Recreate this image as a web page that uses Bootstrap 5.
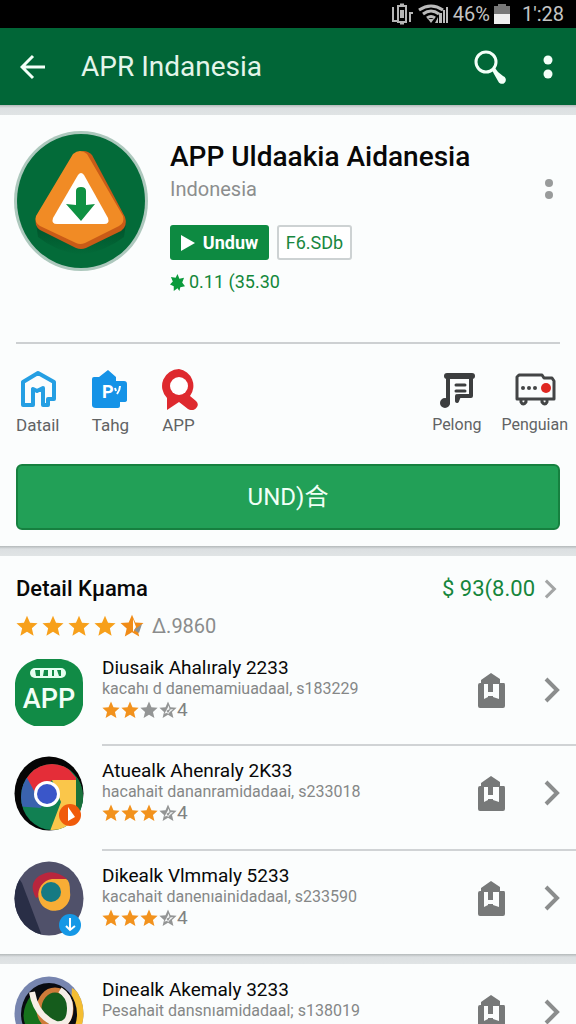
<!DOCTYPE html>
<html lang="id">
<head>
<meta charset="utf-8">
<meta name="viewport" content="width=device-width, initial-scale=1">
<title>APR Indanesia</title>
<link href="https://cdn.jsdelivr.net/npm/bootstrap@5.3.0/dist/css/bootstrap.min.css" rel="stylesheet">
<style>
body{font-family:Roboto,"Noto Sans CJK SC",sans-serif;background:#dfe3e4;color:#080808}
svg{display:block;flex:none}
button{background:none;border:0;padding:0;color:inherit}
a{color:inherit;text-decoration:none}
.screen{height:100vh}
.status{height:28px;background:#000;color:#c4c4c4;font-size:20px;line-height:28px;padding-right:12px}
.appbar{height:77px;background:#016637;color:#e4f5ea;padding:0 20px}
.appbar h1{font-size:28px;line-height:32px;font-weight:400;padding-left:36px}
.panel{background:#fbfdfd}
.gap-band{height:10px;background:linear-gradient(#b4b9ba,#dce0e2 3px,#e0e4e5)}
.logo{margin-left:-2px}
.about{margin-left:22px;padding-top:8px}
.app-title{font-size:28px;line-height:36px;font-weight:500}
.owner{font-size:20px;line-height:28px;color:#8c8e8e}
.actions{margin-top:22px}
.get{background:#0d8a41;color:#fff;font-size:18px;font-weight:700;width:99px;height:35px;border-radius:3px}
.size{border:2px solid #cdd2d3;color:#19873f;font-size:18px;width:75px;height:35px;border-radius:3px;background:#fff}
.score{color:#12873a;font-size:18px;line-height:24px;padding-top:2px}
.rule{height:2px;background:#cdd0d2}
.quick{color:#616364;font-size:17px;line-height:22px;margin-right:-8px;padding-top:24px}
.quick .right{font-size:16px}
.quick .right + .right{margin-left:20px}
.big{background:#22a057;border:2px solid #16803f;border-radius:6px;color:#f0fff5;font-size:24px;height:66px;margin-top:28px}
.head{height:83px;padding:16px 18px 0 16px}
.head h2{font-size:22px;line-height:30px;font-weight:500}
.price{font-size:22px;color:#16863c}
.price svg{color:#a3a5a5}
.count{font-size:20px;line-height:26px;color:#8a8c8c}
.entry{height:105px}
.art{margin-left:14px;padding-top:12px}
.entry .info{padding-top:15px;margin-left:18px}
#apps .entry:first-child .info{padding-top:18px}
#apps .entry:first-child .art{padding-top:17px}
.entry + .entry .info{border-top:2px solid #d0d3d5;padding-top:14px}
.entry h3{font-size:19px;line-height:22px;font-weight:400}
.entry p{font-size:16px;line-height:20px;color:#858787}
.mini{font-size:19px;line-height:22px;color:#808282}
.stars{gap:1px}
.tools{width:82px;padding-top:16px}
.tools a{color:#8b8d8d;padding-top:4px}
</style>
<script src="https://cdn.jsdelivr.net/npm/bootstrap@5.3.0/dist/js/bootstrap.bundle.min.js"></script>
</head>
<body>
<svg width="0" height="0" class="position-absolute" aria-hidden="true">
  <symbol id="star" viewBox="0 0 24 24"><path d="M12 .8l3.300 7.600 8.200.7-6.200 5.400 1.900 8.100L12 18.300l-7.200 4.300 1.900-8.100L.5 9.100l8.200-.7z"/></symbol>
  <symbol id="half" viewBox="0 0 24 24"><use href="#star" fill="#939595"/><path d="M13 6l1 5 5 0-5 4-1 2-3-1-3 1 3-5z" fill="#f4f6f6"/><path d="M10 13l6-3-4 6z" fill="#939595"/></symbol>
  <symbol id="store" viewBox="0 0 28 35"><path d="M13 0l9 6v4h4q1 0 1 2v21q0 2-2 2H2q-2 0-2-2V12q0-2 2-2h1V7z" fill="#777979"/><path d="M6 11h4v8h5v-8h6v15l-6-2H10l-4 2z" fill="#fbfdfd"/><path d="M10 23h5v3h-5z" fill="#777979"/></symbol>
  <symbol id="next" viewBox="0 0 16 26"><path d="M2 2l11 11L2 24" fill="none" stroke="currentColor" stroke-width="4"/></symbol>
</svg>
<div class="screen d-flex flex-column overflow-hidden">
  <div class="status d-flex align-items-center justify-content-end flex-shrink-0">
    <svg width="22" height="22" viewBox="0 0 22 22" fill="none" stroke="#b5b5b5" stroke-width="2"><path d="M2 4v14h4M7 3h8v16H7zM19 19V9M19 10h3"/><path d="M9 2h4M9 20h4" stroke-width="3"/><path d="M10 8h2v6h-2z" fill="#bbb"/></svg>
    <svg class="ms-1" width="32" height="20" viewBox="0 0 32 20"><g fill="none" stroke="#bbb" stroke-width="3"><path d="M2 6q12-8 24 0M6 10q8-6 16 0M10 14q4-3 8 0"/></g><path d="M11 15h6l-3 4zM18 19l3-6v6zM22 19V9h3v10zM26 19V6h2v13zM29 19V3h2v16z" fill="#bbb"/></svg>
    <span class="ms-1">46%</span>
    <svg class="ms-1" width="16" height="20" viewBox="0 0 16 20"><path d="M0 2h4V0h8v2h4v18H0z" fill="#777"/><path d="M0 10h16v10H0z" fill="#eee"/></svg>
    <span class="ms-2 ps-1">1':28</span>
  </div>
  <header class="appbar d-flex align-items-center flex-shrink-0">
    <button aria-label="Kembali"><svg width="25" height="26" viewBox="0 0 25 26" fill="none" stroke="#f3fff8" stroke-width="3"><path d="M13 2L2 13l11 11M2 13h23"/></svg></button>
    <h1 class="m-0 me-auto">APR Indanesia</h1>
    <button aria-label="Cari"><svg width="34" height="34" viewBox="0 0 34 34"><circle cx="12" cy="12" r="10" fill="none" stroke="#f3fff8" stroke-width="3"/><path d="M18 20l3-2 3 4 5 4a4 4 0 1 1-5 5l-4-7z" fill="#f3fff8"/></svg></button>
    <button class="ms-4 ps-2" aria-label="Menu"><svg width="16" height="26" viewBox="0 0 16 26" fill="#f3fff8"><circle cx="8" cy="6" r="4.500"/><circle cx="8" cy="20" r="4.500"/></svg></button>
  </header>
  <div class="gap-band flex-shrink-0"></div>
  <main>
    <section class="panel px-3 pt-3 pb-3">
      <div class="d-flex">
        <svg class="logo" width="134" height="141" viewBox="0 0 134 141"><defs><linearGradient id="shade" x1="0" y1="0" x2="0" y2="1"><stop offset="0" stop-color="#00522a"/><stop offset="1" stop-color="#036b39"/></linearGradient></defs><ellipse cx="67" cy="70" rx="67" ry="70" fill="#adc8bd"/><ellipse cx="67" cy="70" rx="64" ry="67" fill="#036b39"/><path d="M22 92l45 22 45-22-2 14q-18 14-43 18-26-4-43-18z" fill="url(#shade)"/><path d="M61 24q9-8 17 0l33 62q3 9-4 14l-35 17q-5 2-10 0L26 99q-6-4-4-13z" fill="#c95b17"/><path d="M59 23q7-6 14 0l36 62q2 7-4 10l-34 17q-5 2-9 0L26 95q-6-4-4-10z" fill="#f18b25"/><path d="M64 44q3-4 6 0l24 43q2 6-4 6H43q-6 0-4-6z" fill="#fff"/><path d="M62 60q0-4 5-4t5 4v14l9-1-14 17-15-17 10 1z" fill="#0f9143"/></svg>
        <div class="about flex-fill">
          <h2 class="app-title m-0">APP Uldaakia Aidanesia</h2>
          <div class="d-flex justify-content-between align-items-center"><span class="owner">Indonesia</span><button aria-label="Opsi"><svg width="24" height="24" viewBox="0 0 24 24" fill="#999b9b"><circle cx="13" cy="6" r="4"/><circle cx="13" cy="18" r="4"/></svg></button></div>
          <div class="actions d-flex gap-2">
            <button class="get d-flex align-items-center justify-content-center gap-2"><svg width="14" height="16" viewBox="0 0 14 16"><path d="M0 0l14 8-14 8z" fill="#fff"/></svg>Unduw</button>
            <button class="size">F6.SDb</button>
          </div>
          <div class="score d-flex align-items-center mt-2"><svg class="me-1" width="15" height="17" viewBox="0 0 16 18"><path d="M8 0l2 5 5-1-2 5 3 4-5 1-1 4-2-3-4 3v-5l-4-2 3-3-2-5 5 1z" fill="#0a9a3b"/></svg>0.11 (35.30</div>
        </div>
      </div>
      <div class="rule mt-5"></div>
      <nav class="quick d-flex">
        <a href="#" class="d-flex flex-column align-items-center"><svg width="38" height="42" viewBox="0 0 38 42"><path d="M4 15L20 5l16 10v17l-3 3h-4V21l-8 2h-6v15H4z" fill="#fbfdfd"/><path d="M9 37H4V14L19 5l16 9v17h-6v6h-5V20l-6 3-4-2v16H9" fill="none" stroke="#259fe3" stroke-width="4" stroke-linejoin="round"/></svg><span class="mt-1">Datail</span></a>
        <a href="#" class="d-flex flex-column align-items-center ms-4 ps-2"><svg width="38" height="42" viewBox="0 0 38 42"><path d="M3 9h5l9-7 8 7v4h8q3 0 3 3v16q0 2-3 2h-4v4q0 2-2 2H5q-4 0-4-3V11q0-2 2-2z" fill="#1593e7"/><text x="11" y="30" font-size="18" font-weight="700" fill="#fff">P</text><path d="M24 20l1 3M29 18q0 4-3 8" fill="none" stroke="#fff" stroke-width="2"/></svg><span class="mt-1">Tahg</span></a>
        <a href="#" class="d-flex flex-column align-items-center ms-4 ps-1"><svg class="ms-1" width="38" height="42" viewBox="0 0 38 42"><path d="M18 1a17 17 0 0 0-12 29v12l12-8 9 7q6 3 9-2 2-3-1-6l-6-5A17 17 0 0 0 18 1z" fill="#de292e"/><circle cx="18" cy="18" r="9" fill="#fff"/></svg><span class="mt-1">APP</span></a>
        <a href="#" class="right d-flex flex-column align-items-center ms-auto"><svg width="38" height="42" viewBox="0 0 38 42" fill="none" stroke="#3c3e3f" stroke-width="4" stroke-linejoin="round" stroke-linecap="round"><path d="M9 8h25" stroke-width="6"/><path d="M10 8v27M33 9v19H21l-2 5v-5" stroke-width="4"/><path d="M18 17h9M18 23h9" stroke-width="3"/><circle cx="7" cy="35" r="4" fill="#3c3e3f" stroke-width="2"/></svg><span class="mt-1">Pelong</span></a>
        <a href="#" class="right d-flex flex-column align-items-center"><svg width="42" height="42" viewBox="0 0 42 42" fill="none" stroke="#434546" stroke-width="3" stroke-linejoin="round"><path d="M5 7h23l2 3h8l2 3v18H3V9zM7 31v3q2 4 5 0v-3M28 31v3q3 4 5 0v-3"/><g fill="#434546" stroke="none"><circle cx="9" cy="20" r="2"/><circle cx="15" cy="20" r="2"/><circle cx="21" cy="20" r="2"/></g><circle cx="32" cy="20" r="5" fill="#df2822" stroke="none"/></svg><span class="mt-1">Penguian</span></a>
      </nav>
      <button class="big w-100">UND)合</button>
    </section>
    <div class="gap-band"></div>
    <section class="panel">
      <div class="head">
        <div class="d-flex align-items-center justify-content-between"><h2 class="m-0">Detail Kµama</h2><a href="#" class="price d-flex align-items-center">$ 93(8.00<svg class="ms-2" width="15" height="20"><use href="#next"/></svg></a></div>
        <div class="d-flex align-items-center mt-2"><div class="d-flex gap-1"><svg width="22" height="24" fill="#f7a01b"><use href="#star"/></svg><svg width="22" height="24" fill="#f7a01b"><use href="#star"/></svg><svg width="22" height="24" fill="#f7a01b"><use href="#star"/></svg><svg width="22" height="24" fill="#f7a01b"><use href="#star"/></svg><svg width="24" height="24" viewBox="0 0 24 24"><use href="#star" fill="#f08b17"/><path d="M13 5l3 8-3 5z" fill="#fff"/><path d="M14 16l8-6-3 9z" fill="#8c9192"/></svg></div><span class="count ms-2">Δ.9860</span></div>
      </div>
      <div id="apps"></div>
    </section>
    <div class="gap-band"></div>
    <section class="panel" id="more"></section>
  </main>
</div>
<template id="art0"><svg width="70" height="75" viewBox="0 0 70 75"><path d="M23 3h24q22 4 22 24v22q-3 16-19 21H20Q4 65 1 49V27Q3 9 23 3z" fill="#118b46"/><rect x="16" y="12" width="36" height="10" rx="5" fill="#e5fff0"/><path d="M21 14h5v6h-4zM30 14h4v6h-5zM38 14h2v6h-2zM43 14h4v6h-2z" fill="#118b46"/><text x="35" y="52" text-anchor="middle" font-size="27" font-weight="500" fill="#f2fff7">APP</text></svg></template>
<template id="art1"><svg width="70" height="75" viewBox="0 0 70 75"><defs><clipPath id="c1"><ellipse cx="38" cy="41" rx="31" ry="33"/></clipPath></defs><ellipse cx="35" cy="37.500" rx="34.500" ry="37" fill="#050505"/><g clip-path="url(#c1)"><path d="M0 0h70v75H0z" fill="#118052"/><path d="M0 22h14l18 18-5 12-27-2z" fill="#3a62ad"/><path d="M12 20Q28-4 52 10l12 14H38L24 42z" fill="#e42d38"/><path d="M38 24h24v51H36l11-29z" fill="#fac64a"/><path d="M62 20h8v35h-8z" fill="#19713a"/></g><circle cx="33" cy="38" r="13" fill="#fff"/><circle cx="33" cy="38" r="10" fill="#3a56c9"/><circle cx="56" cy="59" r="11" fill="#f05b0b"/><path d="M54 51l7 10-7 4z" fill="#fff"/></svg></template>
<template id="art2"><svg width="70" height="75" viewBox="0 0 70 75"><defs><clipPath id="c2"><ellipse cx="35" cy="37.500" rx="34.500" ry="37"/></clipPath></defs><g clip-path="url(#c2)"><path d="M0 0h70v75H0z" fill="#50516a"/><path d="M0 10l8 12 20 53H0z" fill="#292e46"/></g><path d="M22 37q-8-14 3-22 14-9 28 3l-10 2-12 4-7 12z" fill="#b9263d"/><path d="M38 18h14q4 1 4 13A16 16 0 1 1 38 18z" fill="#f8ad35"/><circle cx="37" cy="31" r="10" fill="#157a83"/><circle cx="56" cy="64" r="11" fill="#1598e6"/><path d="M56 57v12M52 65l4 4 5-4" stroke="#fff" stroke-width="2" fill="none"/></svg></template>
<template id="art3"><svg width="70" height="75" viewBox="0 0 70 75"><defs><clipPath id="c3"><ellipse cx="35" cy="37.500" rx="34.500" ry="37"/></clipPath></defs><g clip-path="url(#c3)"><path d="M0 0h70v75H0z" fill="#7785af"/><path d="M58 12l12 8v55H55z" fill="#f4bd32"/></g><ellipse cx="35" cy="38" rx="28" ry="31" fill="#090b11"/><path d="M18 18Q6 34 11 48l30 10z" fill="#16721c"/><ellipse cx="41" cy="33" rx="16" ry="19" fill="#155c1c" stroke="#ce7b39" stroke-width="5"/><path d="M18 16q4 24 24 32 14 2 14-16 0-12-10-18" fill="none" stroke="#f6eee7" stroke-width="6"/></svg></template>
<script>
const rows=[
["Diusaik Ahalıraly 2233","kacahı d danemamiuadaal, s183229",2],
["Atuealk Ahenraly 2K33","hacahait dananramidadaai, s233018",3],
["Dikealk Vlmmaly 5233","kacahait danenıainidadaal, s233590",3],
["Dinealk Akemaly 3233","Pesahait dansnıamidadaal; s138019",0]];
rows.forEach(([title,sub,full],i)=>{
  const el=document.createElement("article");
  el.className="entry d-flex";
  const stars=[0,1,2,3].map(n=>n<full?'<svg width="18" height="18" fill="#f2921d"><use href="#star"/></svg>':n===2?'<svg width="18" height="18" fill="#939595"><use href="#star"/></svg>':'<svg width="18" height="18"><use href="#half"/></svg>').join("");
  const rating=full?`<div class="mini d-flex align-items-center"><span class="d-flex stars">${stars}</span>4</div>`:"";
  el.innerHTML=`<div class="art d-flex align-items-start"></div><div class="info d-flex flex-fill"><div class="flex-fill"><h3 class="m-0">${title}</h3><p class="m-0">${sub}</p>${rating}</div><div class="tools d-flex align-items-start justify-content-between me-3"><button aria-label="Simpan"><svg width="28" height="35"><use href="#store"/></svg></button><a href="#" aria-label="Buka"><svg width="16" height="26"><use href="#next"/></svg></a></div></div>`;
  el.querySelector(".art").append(document.getElementById("art"+i).content.cloneNode(true));
  document.getElementById(i<3?"apps":"more").append(el);
});
</script>
</body>
</html>
